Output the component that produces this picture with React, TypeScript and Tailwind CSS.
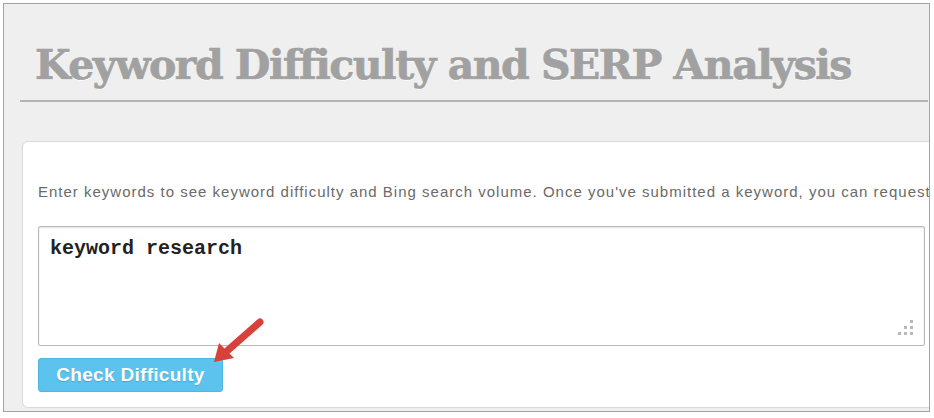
import React from "react";

// Keyword Difficulty tool screenshot
export default function App() {
  return (
    <div className="w-[934px] h-[418px] bg-white pt-[3px] pl-[3px] relative">
      <div className="w-[927px] h-[409px] border border-[#a4a4a4] bg-[#efefef] overflow-hidden flex flex-col">
        {/* Title */}
        <div className="ml-[16px] mr-[1px] h-[98px] border-b-2 border-[#b4b4b4] flex items-end pl-[15px] pb-[14px]">
          <h1
            className="text-[41px] leading-none font-bold tracking-[-1.5px] text-[#a1a1a1] whitespace-nowrap [-webkit-text-stroke:0.7px_#a1a1a1] [text-shadow:0_1px_0_#ffffff]"
            style={{ fontFamily: '"DejaVu Serif", serif' }}
          >
            Keyword Difficulty and SERP Analysis
          </h1>
        </div>

        {/* Card */}
        <div className="mt-[39px] ml-[18px] w-[940px] flex-1 mb-[3px] bg-white border border-[#dadada] rounded-[6px] pt-[42px] pl-[15px]">
          <p
            className="text-[15px] leading-[16px] tracking-[1px] text-[#6a6a6a] whitespace-nowrap"
            style={{ fontFamily: '"Liberation Sans", Arial, sans-serif' }}
          >
            Enter keywords to see keyword difficulty and Bing search volume. Once you've submitted a keyword, you can request a SERP analysis.
          </p>
          <div className="mt-[26px] w-[887px] h-[120px] border border-[#b8b8b8] rounded-[2px] shadow-[inset_0_1px_2px_rgba(0,0,0,0.12)] relative px-[11px] pt-[9px]">
            <span
              className="text-[20px] leading-[24px] font-bold text-[#222]"
              style={{ fontFamily: '"Liberation Mono", "Courier New", monospace' }}
            >
              keyword research
            </span>
            {/* resize grip */}
            <svg className="absolute right-[10px] bottom-[9px]" width="18" height="18" viewBox="0 0 18 18">
              <g fill="#b8b8b8">
                <rect x="14" y="2" width="3" height="3" />
                <rect x="8" y="8" width="3" height="3" />
                <rect x="14" y="8" width="3" height="3" />
                <rect x="2" y="14" width="3" height="3" />
                <rect x="8" y="14" width="3" height="3" />
                <rect x="14" y="14" width="3" height="3" />
              </g>
            </svg>
          </div>
          <button
            className="mt-[12px] w-[185px] h-[34px] rounded-[3px] bg-[#5bc3ee] border border-[#4fb6e0] text-white text-[19px] font-bold tracking-[0.3px] [text-shadow:0_1px_1px_rgba(0,0,0,0.15)]"
            style={{ fontFamily: '"Liberation Sans", Arial, sans-serif' }}
          >
            Check Difficulty
          </button>
        </div>
      </div>

      {/* red arrow pointing at the button */}
      <svg className="absolute left-[205px] top-[312px]" width="64" height="56" viewBox="0 0 64 56">
        <line x1="55" y1="10" x2="22" y2="39" stroke="#d8403a" strokeWidth="7" strokeLinecap="round" />
        <polygon points="9,50 14,31 29,46" fill="#d8403a" />
      </svg>
    </div>
  );
}
